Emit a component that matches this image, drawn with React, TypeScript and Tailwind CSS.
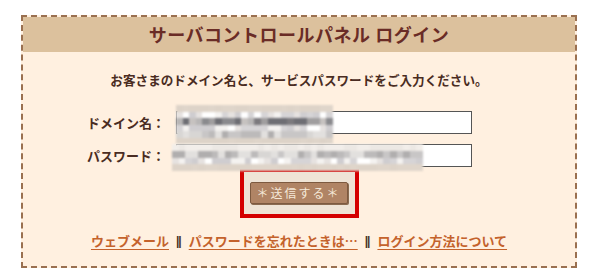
import React from 'react'

const FONT = { fontFamily: '"Noto Sans CJK JP", "Noto Sans", sans-serif' }

// blurred (mosaic) stand-in for the masked input values; one palette per row
function Mosaic({ palettes, cols, seed, className }: { palettes: string[][]; cols: number; seed: number; className: string }) {
  let s = seed
  const rnd = () => {
    s = (s * 9301 + 49297) % 233280
    return s / 233280
  }
  const cells: string[] = []
  palettes.forEach((p) => {
    for (let c = 0; c < cols; c++) cells.push(p[Math.floor(rnd() * p.length)])
  })
  return (
    <div
      className={`absolute grid blur-[1px] ${className}`}
      style={{ gridTemplateColumns: `repeat(${cols}, 1fr)`, gridTemplateRows: `repeat(${palettes.length}, 1fr)` }}
    >
      {cells.map((c, i) => (
        <div key={i} style={{ background: c }} />
      ))}
    </div>
  )
}

const BEIGE = ['#ddd3c8', '#dfd5ca']
const LIGHT = ['#e6e2e0', '#d6d4d6', '#ffffff', '#f4f2f0', '#cfcdd0']
const DARK = ['#8a8a8e', '#a09e9f', '#6e6e74', '#b8b6b6', '#c6c2c0', '#7c7a7e']
const MID = ['#c8c6c6', '#b0aeae', '#d8d6d4', '#bcbaba', '#e2e0de']

function Sep() {
  return <span className="font-['Liberation_Sans'] font-bold text-[12px] text-[#4a3428] tracking-[-1px] pr-[1px]">||</span>
}

export default function App() {
  return (
    <div className="w-[600px] h-[280px] bg-white pt-[15px] pl-[21px]" style={FONT}>
      <div className="w-[556px] h-[253px] border-2 border-dashed border-[#9a7050] bg-[#fff0e0] flex flex-col">
        <div className="h-[35px] bg-[#dcc19d] flex items-center justify-center">
          <h1 className="text-[18px] font-bold text-[#6a2c26] tracking-[0.5px]">サーバコントロールパネル ログイン</h1>
        </div>

        <p className="mt-[18px] text-center text-[12.6px] font-bold text-[#4a2c22] leading-[20px]">
          お客さまのドメイン名と、サービスパスワードをご入力ください。
        </p>

        <div className="mt-[21px] flex flex-col gap-[10px]">
          <div className="flex items-center">
            <span className="w-[81px] ml-[64px] text-[13px] font-bold text-[#4a2c22]">ドメイン名：</span>
            <div className="relative ml-[8px] w-[296px] h-[23px] bg-white border border-[#555]">
              <Mosaic palettes={[BEIGE, LIGHT, DARK, LIGHT, MID, BEIGE]} cols={24} seed={7} className="left-[-1px] top-[-7px] w-[157px] h-[39px]" />
            </div>
          </div>
          <div className="flex items-center">
            <span className="w-[81px] ml-[64px] text-[13px] font-bold text-[#4a2c22]">パスワード：</span>
            <div className="relative ml-[8px] w-[296px] h-[23px] bg-white border border-[#555]">
              <Mosaic palettes={[['#f2eeea', '#ece8e4'], MID, LIGHT, BEIGE]} cols={38} seed={31} className="left-[-5px] top-[-1px] w-[251px] h-[27px]" />
            </div>
          </div>
        </div>

        <div className="mt-[1px] flex justify-center">
          <div className="border-4 border-[#d40000] bg-[#efe4d6] pl-[6px] pr-[7px] pt-[7px] pb-[10px]">
            <button className="w-[98px] h-[22px] rounded-[2px] bg-[#b08465] border border-[#7d5a40] shadow-[1px_1px_0_#8a6a50] text-[#f5e8d8] text-[12px] tracking-[2px] leading-none">
              ＊送信する＊
            </button>
          </div>
        </div>

        <div className="mt-[13px] flex justify-center items-center gap-[7px] text-[13px] font-bold">
          <a className="text-[#c4622c] underline underline-offset-[3px]">ウェブメール</a>
          <Sep />
          <a className="text-[#c4622c] underline underline-offset-[3px]">パスワードを忘れたときは…</a>
          <Sep />
          <a className="text-[#c4622c] underline underline-offset-[3px]">ログイン方法について</a>
        </div>
      </div>
    </div>
  )
}
